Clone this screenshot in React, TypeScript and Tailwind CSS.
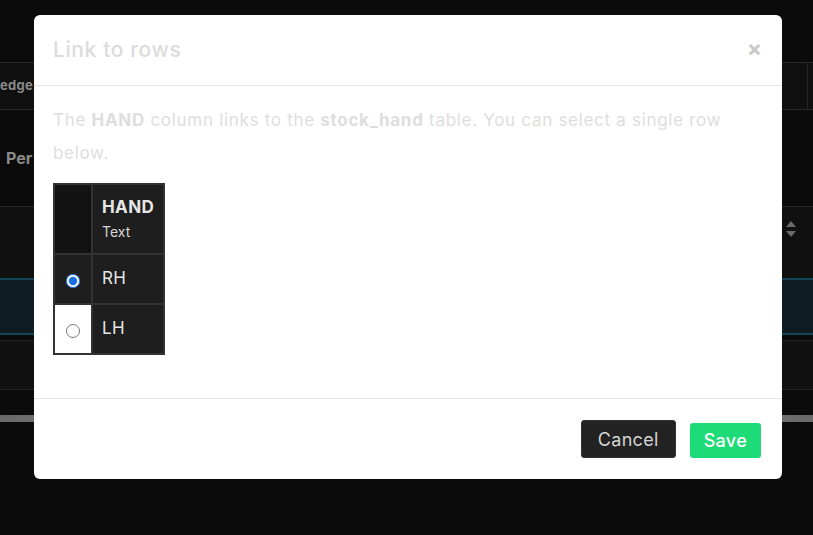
import React from "react";

const rows = [
  { value: "RH", checked: true },
  { value: "LH", checked: false },
];

function Backdrop() {
  return (
    <div className="flex h-full flex-col bg-[#0b0b0b] font-['Inter',sans-serif]">
      <div className="h-[63px] border-b border-[#262626]" />
      <div className="flex h-[47px] items-center justify-between border-b border-[#262626] bg-[#101010]">
        <span className="text-[13px] font-bold tracking-[0.3px] text-[#8a8a8a]">edge</span>
        <div className="h-full w-[6px] border-l border-[#262626]" />
      </div>
      <div className="flex h-[96px] items-center">
        <span className="ml-[6px] text-[16px] font-bold text-[#8a8a8a]">Per</span>
      </div>
      <div className="flex h-[72px] items-start justify-end border-t border-[#222] bg-[#101010] pr-[16px] pt-[12px]">
        <svg width="12" height="20" viewBox="0 0 12 20" className="text-[#6a6a6a]">
          <path d="M6 2 L11 8 H1 Z" fill="currentColor" />
          <path d="M6 18 L11 12 H1 Z" fill="currentColor" />
        </svg>
      </div>
      <div className="h-[57px] border-y-2 border-[#15455a] bg-[#0e1d24]" />
      <div className="mt-[5px] h-[50px] border-y border-[#222] bg-[#111]" />
      <div className="mt-[25px] h-[7px] bg-gradient-to-r from-[#6a6a6a] via-[#8a8a8a] to-[#6a6a6a]" />
    </div>
  );
}

function LinkModal() {
  return (
    <div className="absolute inset-0 pt-[15px] pl-[34px] font-['Inter',sans-serif]">
      <div className="flex h-[464px] w-[748px] flex-col rounded-[6px] bg-white">
        <div className="flex h-[71px] items-start justify-between border-b border-[#e5e5e5] pl-[19px] pr-[20px] pt-[20px]">
          <h2 className="text-[21px] font-medium leading-[30px] tracking-[0.6px] text-[#dcdcdc]">Link to rows</h2>
          <span className="mt-[-2px] text-[22px] font-bold leading-[30px] text-[#c8c8c8]">×</span>
        </div>
        <div className="flex-1 px-[19px] pt-[18px]">
          <p className="w-[690px] text-[17px] leading-[33px] tracking-[0.7px] text-[#dedede]">
            The <b className="font-bold">HAND</b> column links to the <b className="font-bold">stock_hand</b> table. You
            can select a single row below.
          </p>
          <table className="mt-[13px] border-collapse">
            <thead>
              <tr className="h-[70px]">
                <th className="w-[38px] border-2 border-[#333] bg-[#121212]" />
                <th className="w-[72px] border-2 border-[#333] bg-[#1e1e1e] pl-[9px] pr-[8px] pt-[10px] text-left align-top">
                  <div className="text-[17px] font-bold leading-[24px] tracking-[0.4px] text-[#e6e6e6]">HAND</div>
                  <div className="text-[14px] font-normal leading-[26px] text-[#d6d6d6]">Text</div>
                </th>
              </tr>
            </thead>
            <tbody>
              {rows.map((row) => (
                <tr key={row.value} className="h-[50px]">
                  <td
                    className={`border-2 border-[#333] text-center ${row.checked ? "bg-[#1e1e1e]" : "bg-white"}`}
                  >
                    <input
                      type="radio"
                      name="hand"
                      defaultChecked={row.checked}
                      className="h-[14px] w-[14px] align-middle accent-[#1a6ee6]"
                    />
                  </td>
                  <td className="border-2 border-[#333] bg-[#1e1e1e] pl-[9px] text-[17px] tracking-[0.4px] text-[#e6e6e6]">
                    {row.value}
                  </td>
                </tr>
              ))}
            </tbody>
          </table>
        </div>
        <div className="flex h-[81px] items-start justify-end gap-[14px] border-t border-[#e5e5e5] pr-[21px] pt-[21px]">
          <button className="h-[38px] rounded-[3px] border border-[#333] bg-[#222] px-[16px] text-[18px] tracking-[0.3px] text-[#d4d4d4]">
            Cancel
          </button>
          <button className="mt-[3px] h-[35px] rounded-[3px] bg-[#1ddc78] px-[14px] text-[18px] font-medium tracking-[0.3px] text-white">
            Save
          </button>
        </div>
      </div>
    </div>
  );
}

export default function App() {
  return (
    <div className="relative h-[535px] w-[813px] overflow-hidden">
      <Backdrop />
      <LinkModal />
    </div>
  );
}
